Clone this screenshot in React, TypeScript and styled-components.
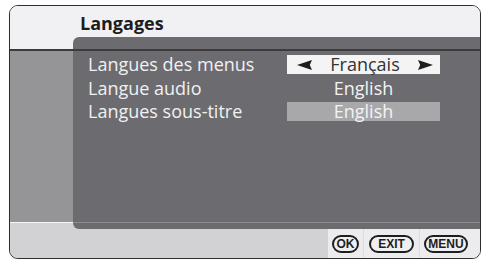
import React from "react";
import styled, { createGlobalStyle } from "styled-components";

const GlobalStyle = createGlobalStyle`
  html, body { margin: 0; padding: 0; background: #ffffff; }
  body { font-family: "Open Sans", "Noto Sans", sans-serif; }
`;

const Frame = styled.div`
  margin: 5px 0 0 9px;
  width: 472px;
  height: 254px;
  box-sizing: border-box;
  border: 1px solid #2e2e30;
  border-radius: 9px;
  overflow: hidden;
  display: grid;
  grid-template-columns: 63px 1fr;
  grid-template-rows: 31px 12px 2px 171px 1px 6px 1fr;
  background: #f1f1f3;
  box-shadow: 0 1px 1px rgba(0, 0, 0, 0.15);
`;

const TitleBar = styled.div`
  grid-column: 1 / -1;
  background: #f1f1f3;
  padding: 5px 0 0 70px;
`;

const Title = styled.h1`
  margin: 0;
  font-family: "Open Sans", "Noto Sans", sans-serif;
  font-weight: 700;
  font-size: 18px;
  line-height: 24px;
  color: #1c1c1e;
`;

const Cell = styled.div<{ $bg: string }>`
  background: ${(p) => p.$bg};
`;

const PanelTop = styled.div`
  background: #6c6c70;
  border-top-left-radius: 6px;
`;

const Divider = styled.div`
  grid-column: 1 / -1;
  background: #3b3b3d;
`;

const PanelBody = styled.div`
  background: #6c6c70;
  padding: 4px 0 0 15px;
  display: flex;
  flex-direction: column;
  gap: 4.5px;
`;

const FootWell = styled.div`
  background: #d2d2d4;
  display: flex;
`;

const PanelFoot = styled.div`
  flex: 1;
  background: #6c6c70;
  border-bottom-left-radius: 6px;
`;

const Footer = styled.div`
  grid-column: 1 / -1;
  background: #d2d2d4;
  display: flex;
  justify-content: flex-end;
`;

const ButtonBar = styled.div`
  background: #ececee;
  display: flex;
  padding-right: 8px;
`;

const ButtonCell = styled.div<{ $w: number; $sep?: boolean }>`
  width: ${(p) => p.$w}px;
  box-sizing: border-box;
  display: flex;
  align-items: center;
  justify-content: center;
  border-left: ${(p) => (p.$sep ? "1px solid #dcdcde" : "none")};
`;

const Pill = styled.span<{ $w: number }>`
  width: ${(p) => p.$w}px;
  height: 18px;
  box-sizing: border-box;
  border: 2px solid #1e1e1e;
  border-radius: 9px;
  display: flex;
  align-items: center;
  justify-content: center;
  font-family: "Liberation Sans", Arial, sans-serif;
  font-weight: 700;
  font-size: 12px;
  line-height: 1;
  color: #1e1e1e;
  background: #efeff1;
`;

const Row = styled.div`
  display: grid;
  grid-template-columns: 199px 153px;
  height: 19px;
`;

const Label = styled.span`
  font-family: "Open Sans", "Noto Sans", sans-serif;
  font-size: 18px;
  line-height: 19px;
  color: #f1f1f1;
  white-space: nowrap;
`;

type Variant = "active" | "plain" | "dim";

const Value = styled.div<{ $variant: Variant }>`
  height: 19px;
  display: flex;
  align-items: center;
  justify-content: ${(p) => (p.$variant === "active" ? "space-between" : "center")};
  padding: ${(p) => (p.$variant === "active" ? "0 7px 0 10px" : "0")};
  box-sizing: border-box;
  background: ${(p) =>
    p.$variant === "active" ? "#f4f4f5" : p.$variant === "dim" ? "#a8a8ab" : "transparent"};
  color: ${(p) => (p.$variant === "active" ? "#333335" : "#f3f3f3")};
  font-family: "Open Sans", "Noto Sans", sans-serif;
  font-size: 18px;
  line-height: 19px;
  white-space: nowrap;
`;

const Arrow = ({ dir }: { dir: "left" | "right" }) => (
  <svg width="15" height="10" viewBox="0 0 15 10" aria-hidden="true">
    {dir === "right" ? (
      <path d="M0 0 L15 5 L0 10 L2.2 5 Z" fill="#1e1e20" />
    ) : (
      <path d="M15 0 L0 5 L15 10 L12.8 5 Z" fill="#1e1e20" />
    )}
  </svg>
);

const rows: { label: string; value: string; variant: Variant }[] = [
  { label: "Langues des menus", value: "Français", variant: "active" },
  { label: "Langue audio", value: "English", variant: "plain" },
  { label: "Langues sous-titre", value: "English", variant: "dim" },
];

export default function App() {
  return (
    <>
      <GlobalStyle />
      <Frame>
        <TitleBar>
          <Title>Langages</Title>
        </TitleBar>
        <Cell $bg="#f1f1f3" />
        <PanelTop />
        <Divider />
        <Cell $bg="#959598" />
        <PanelBody>
          {rows.map((r) => (
            <Row key={r.label}>
              <Label>{r.label}</Label>
              <Value $variant={r.variant}>
                {r.variant === "active" && <Arrow dir="left" />}
                <span>{r.value}</span>
                {r.variant === "active" && <Arrow dir="right" />}
              </Value>
            </Row>
          ))}
        </PanelBody>
        <Cell $bg="#f6f6f6" />
        <Cell $bg="#8c8c90" />
        <Cell $bg="#d2d2d4" />
        <FootWell>
          <PanelFoot />
        </FootWell>
        <Footer>
          <ButtonBar>
            <ButtonCell $w={35}>
              <Pill $w={27}>OK</Pill>
            </ButtonCell>
            <ButtonCell $w={56} $sep>
              <Pill $w={45}>EXIT</Pill>
            </ButtonCell>
            <ButtonCell $w={53} $sep>
              <Pill $w={44}>MENU</Pill>
            </ButtonCell>
          </ButtonBar>
        </Footer>
      </Frame>
    </>
  );
}
